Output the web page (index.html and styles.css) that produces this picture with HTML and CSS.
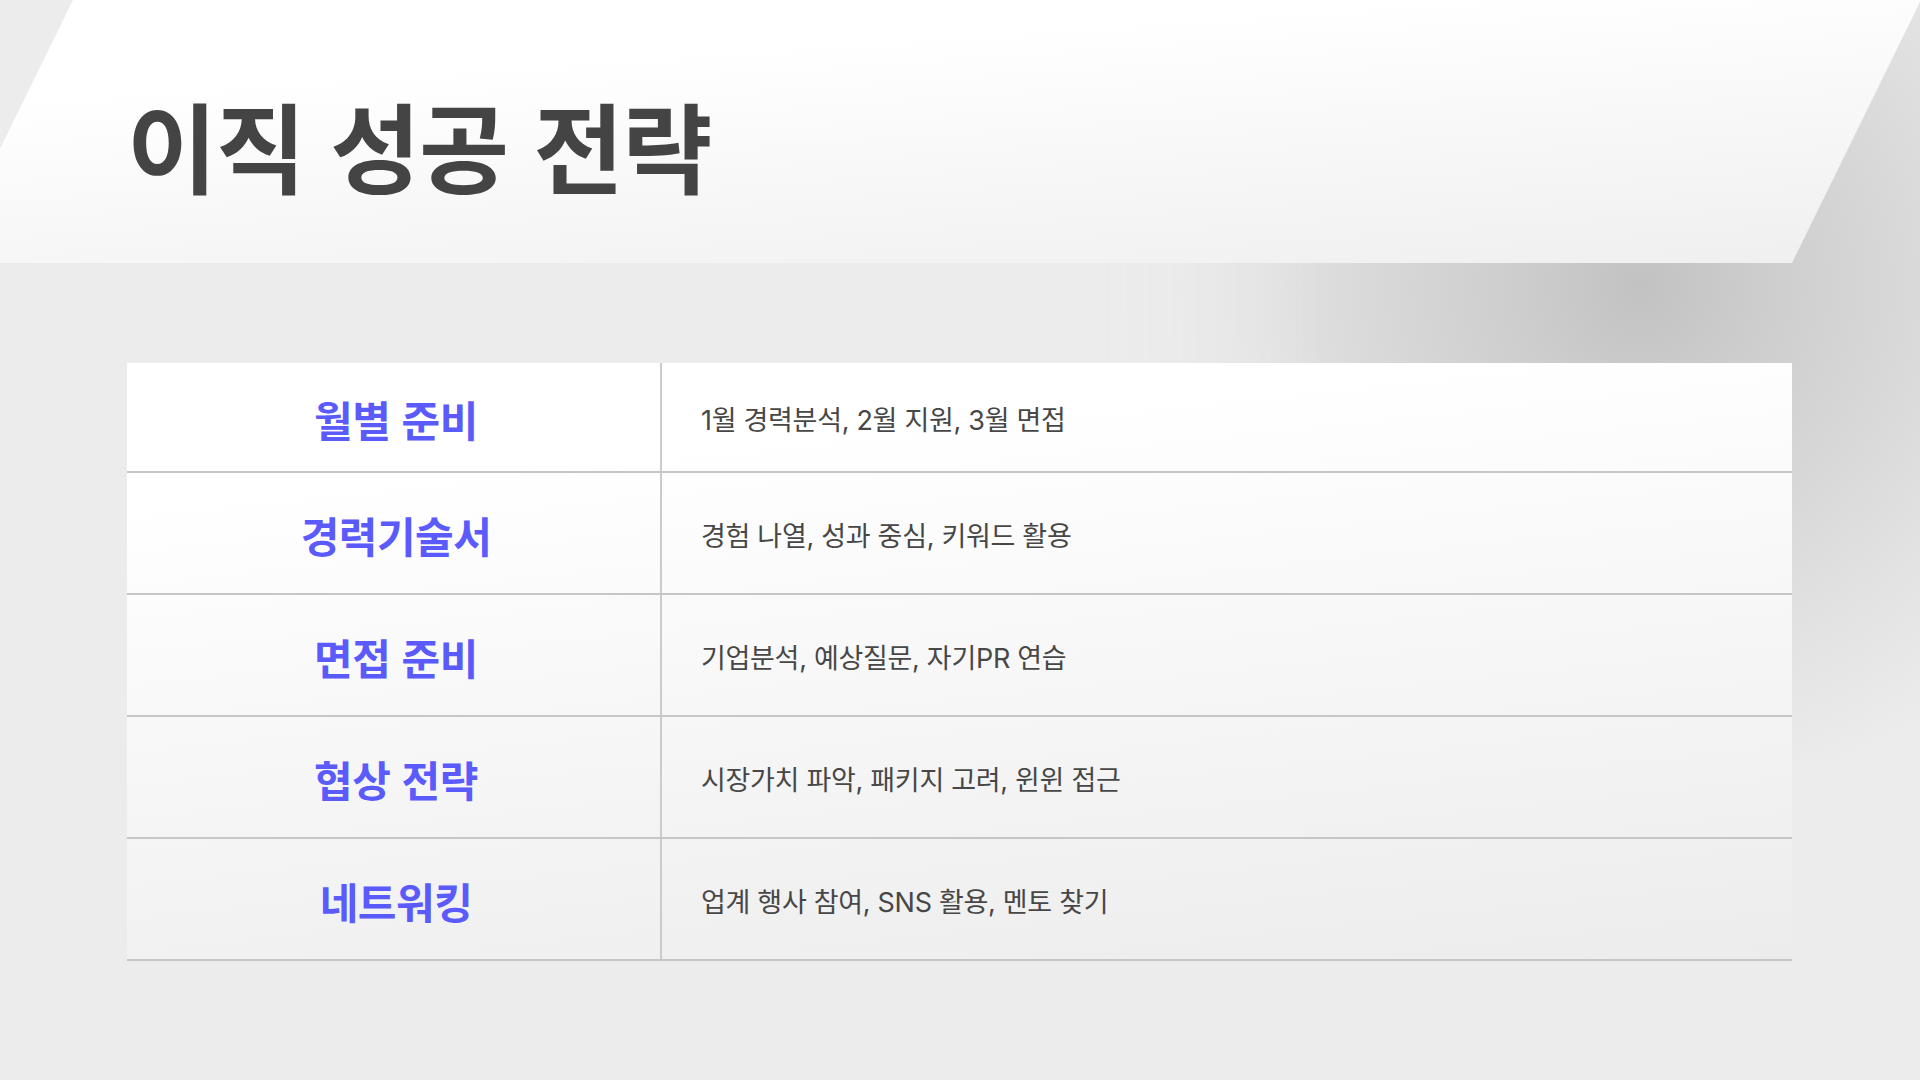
FILE: index.html
```html
<!DOCTYPE html>
<html lang="ko">
<head>
<meta charset="utf-8">
<title>이직 성공 전략</title>
<link rel="stylesheet" href="styles.css">
</head>
<body>
<div class="slide">
  <div class="bg-shadow"></div>
  <div class="bg-banner"></div>
  <main class="content">
    <h1 class="title">이직 성공 전략</h1>
    <div class="table">
      <div class="row first">
        <div class="label">월별 준비</div>
        <div class="desc">1월 경력분석, 2월 지원, 3월 면접</div>
      </div>
      <div class="row">
        <div class="label">경력기술서</div>
        <div class="desc">경험 나열, 성과 중심, 키워드 활용</div>
      </div>
      <div class="row">
        <div class="label">면접 준비</div>
        <div class="desc">기업분석, 예상질문, 자기PR 연습</div>
      </div>
      <div class="row">
        <div class="label">협상 전략</div>
        <div class="desc">시장가치 파악, 패키지 고려, 윈윈 접근</div>
      </div>
      <div class="row">
        <div class="label">네트워킹</div>
        <div class="desc">업계 행사 참여, SNS 활용, 멘토 찾기</div>
      </div>
    </div>
  </main>
</div>
</body>
</html>
```

FILE: styles.css
```css
html, body {
  margin: 0;
  padding: 0;
}
body {
  background: #ececec;
  font-family: Inter, "Noto Sans CJK KR", sans-serif;
}
.slide {
  position: relative;
  width: 1920px;
  height: 1080px;
  overflow: hidden;
  background: #ececec;
}
.bg-shadow {
  position: absolute;
  left: 1100px;
  top: 0;
  width: 820px;
  height: 760px;
  background: radial-gradient(circle at 540px 285px, #c2c2c2 0px, #cdcdcd 120px, #d8d8d8 260px, #e2e2e2 380px, #ececec 520px);
  -webkit-mask-image: linear-gradient(to right, transparent 0px, #000 220px);
  mask-image: linear-gradient(to right, transparent 0px, #000 220px);
}
.bg-banner {
  position: absolute;
  left: 0;
  top: 0;
  width: 1920px;
  height: 263px;
  clip-path: polygon(73px 0, 1921px 0, 1792px 263px, -56px 263px);
  background: linear-gradient(176deg, #ffffff 25%, #efefef 100%);
}
.content {
  position: relative;
  z-index: 1;
  padding: 0 0 0 127px;
}
.title {
  margin: 0;
  padding-top: 94px;
  height: 267px;
  box-sizing: border-box;
  font-family: "Noto Sans CJK KR", sans-serif;
  font-weight: 700;
  font-size: 98px;
  line-height: 1;
  letter-spacing: -1.5px;
  color: #444444;
}
.table {
  width: 1665px;
  margin-top: 96px;
  background: linear-gradient(174deg, #ffffff 18%, #ececec 100%);
}
.row {
  display: grid;
  grid-template-columns: 535px 1fr;
  height: 122px;
  box-sizing: border-box;
  border-bottom: 2px solid #c6c6c6;
}
.row.first {
  height: 110px;
}
.label {
  display: flex;
  align-items: center;
  justify-content: center;
  border-right: 2px solid #cbcbcb;
  font-family: "Noto Sans CJK KR", sans-serif;
  font-weight: 700;
  font-size: 42px;
  letter-spacing: -0.5px;
  color: #5b5bfb;
  padding-top: 2px;
  padding-left: 5px;
}
.desc {
  display: flex;
  align-items: center;
  padding-left: 39px;
  font-size: 27px;
  font-weight: 400;
  color: #474747;
  letter-spacing: -0.3px;
  padding-top: 3px;
}
```
